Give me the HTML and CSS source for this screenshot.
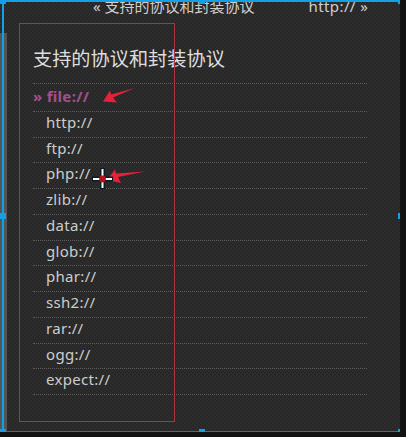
FILE: index.html
```html
<!DOCTYPE html>
<html lang="zh">
<head>
<meta charset="utf-8">
<link rel="stylesheet" href="styles.css">
</head>
<body>
<div class="panel">
  <div class="scrollbar"></div>
  <nav class="pager">
    <span class="prev">« 支持的协议和封装协议</span>
    <span class="next">http:// »</span>
  </nav>
  <div class="side">
    <h2 class="title">支持的协议和封装协议</h2>
    <ul class="menu">
      <li class="item current">» file://</li>
      <li class="item">http://</li>
      <li class="item">ftp://</li>
      <li class="item">php://</li>
      <li class="item">zlib://</li>
      <li class="item">data://</li>
      <li class="item">glob://</li>
      <li class="item">phar://</li>
      <li class="item">ssh2://</li>
      <li class="item">rar://</li>
      <li class="item">ogg://</li>
      <li class="item">expect://</li>
    </ul>
  </div>

  <div class="redbox"></div>
  <svg class="notes" width="406" height="437" viewBox="0 0 406 437">
    <polygon points="103,101.5 110,90.5 111,94.5 135,88 113,97.5 117,102.5" fill="#e8203a"/>
    <polygon points="107,180 115,169.5 116,173.5 145,171.5 118,177 121,183" fill="#e8203a"/>
    <g>
      <rect x="100" y="168" width="5" height="21" fill="#0c1a22"/>
      <rect x="92" y="176.5" width="21" height="5" fill="#0c1a22"/>
      <rect x="101.5" y="169" width="2" height="19" fill="#ffffff"/>
      <rect x="93" y="178" width="19" height="2" fill="#ffffff"/>
      <circle cx="102.5" cy="179" r="3.4" fill="#b3131f"/>
    </g>
  </svg>
  <div class="frame">
    <span class="handle h-tl"></span>
    <span class="handle h-tm"></span>
    <span class="handle h-tr"></span>
    <span class="handle h-ml"></span>
    <span class="handle h-mr"></span>
    <span class="handle h-bl"></span>
    <span class="handle h-bm"></span>
    <span class="handle h-br"></span>
  </div>
</div>
</body>
</html>
```

FILE: styles.css
```css
html, body {
  margin: 0;
  padding: 0;
}
body {
  background: #121212;
  width: 406px;
  height: 437px;
  overflow: hidden;
  font-family: "Noto Sans", "Noto Sans CJK SC", sans-serif;
}
.panel {
  position: relative;
  width: 400px;
  height: 432px;
  background-color: #2a2a2a;
  background-image: repeating-conic-gradient(#2d2d2d 0 25%, #272727 0 50%);
  background-size: 4px 4px;
  overflow: hidden;
}
.scrollbar {
  position: absolute;
  left: 0;
  top: 33px;
  width: 7px;
  bottom: 0;
  background: #555;
}
.pager {
  display: flex;
  margin: -2px 0 0 93px;
  height: 16px;
  line-height: 16px;
  font-size: 15px;
  color: #cfcfcf;
  font-family: "Noto Sans", "Noto Sans CJK SC", sans-serif;
  white-space: nowrap;
}
.next {
  margin-left: 54px;
  letter-spacing: 0.4px;
}
.side {
  padding: 0 33px;
}
.title {
  margin: 32.6px 0 12.4px;
  font-size: 19.2px;
  line-height: 24px;
  font-weight: normal;
  color: #dedede;
}
.menu {
  list-style: none;
  margin: 0;
  padding: 0;
  border-top: 1px dotted #5e5e5e;
}
.item {
  padding: 0 0 4px 13px;
  line-height: 20.73px;
  font-size: 15px;
  color: #cdcdcd;
  border-bottom: 1px dotted #5e5e5e;
  letter-spacing: 0.3px;
}
.item.current {
  padding: 2px 0 4.27px 0;
  color: #a4508e;
  font-weight: bold;
  border-bottom-color: #7b4a70;
}
.redbox {
  position: absolute;
  left: 19px;
  top: 23px;
  width: 154px;
  height: 397px;
  border: 1px solid #ad3342;
}
.notes {
  position: absolute;
  left: 0;
  top: 0;
}
.frame {
  position: absolute;
  left: 2px;
  top: 0;
  width: 396px;
  height: 429px;
  border-left: 2px solid #14a0e6;
  border-right: 2px solid #14a0e6;
  border-top: 2px solid #14a0e6;
  border-bottom: 3px solid #157aad;
}
.handle {
  position: absolute;
  width: 6px;
  height: 6px;
  background: #14a0e6;
}
.h-tl { left: -4px; top: -4px; }
.h-tm { left: 195px; top: -4px; }
.h-tr { right: -4px; top: -4px; }
.h-ml { left: -4px; top: 211px; }
.h-mr { right: -4px; top: 211px; }
.h-bl { left: -4px; bottom: -4px; }
.h-bm { left: 195px; bottom: -4px; }
.h-br { right: -4px; bottom: -4px; }
```
